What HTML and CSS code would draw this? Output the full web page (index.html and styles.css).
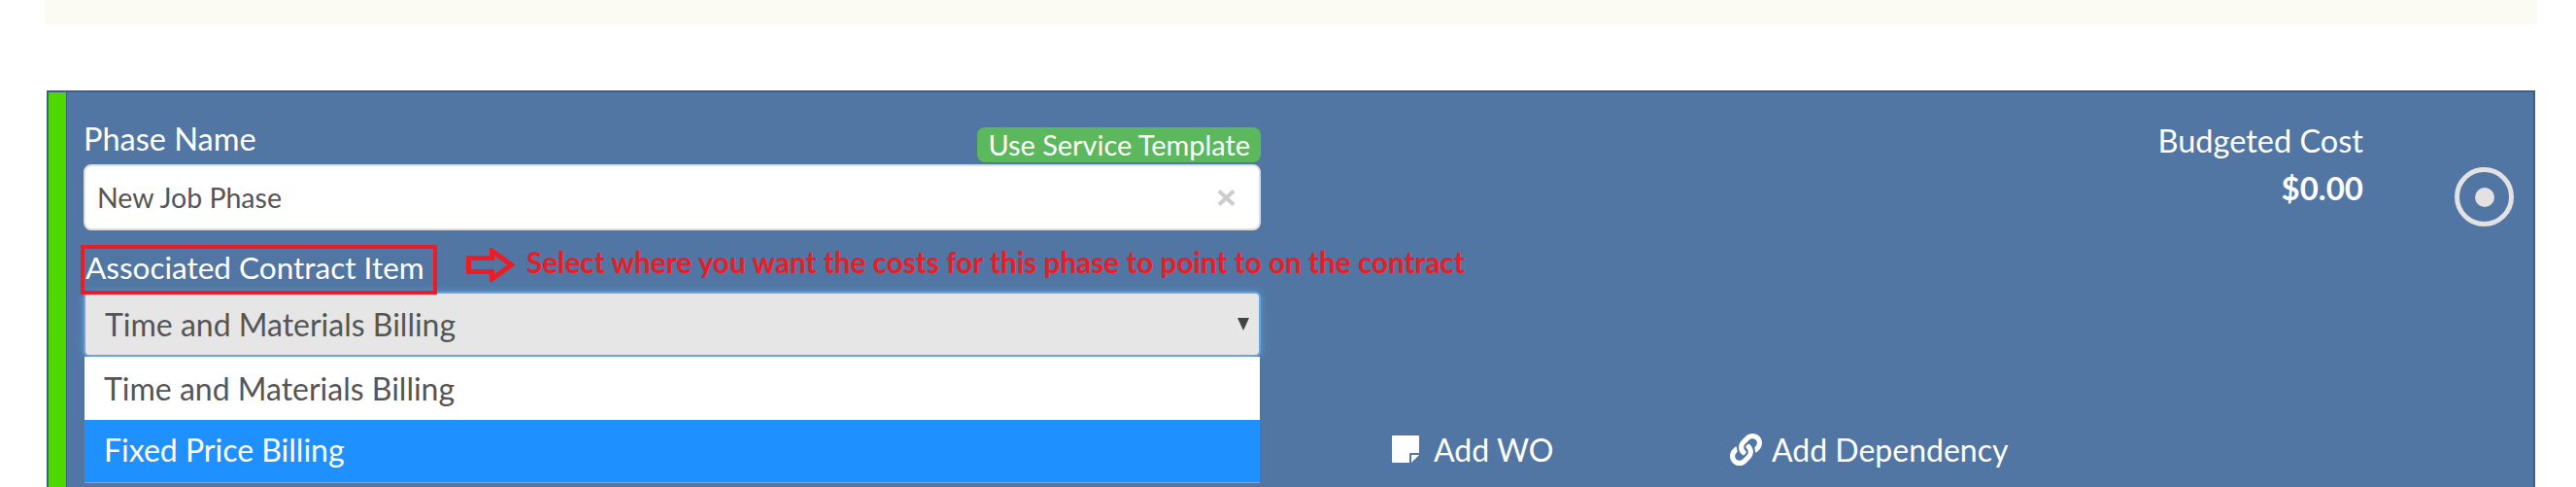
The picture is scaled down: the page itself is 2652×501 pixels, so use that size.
FILE: index.html

```html
<!DOCTYPE html>
<html lang="en">
<head>
  <meta charset="UTF-8" />
  <title>Job Phase</title>
  <link rel="stylesheet" href="styles.css">
</head>
<body>
  <div class="band"></div>

  <div class="panel">
    <div class="stripe"></div>

    <div class="phase-col">
      <div class="head-row">
        <div class="label">Phase Name</div>
        <div class="template-btn">Use Service Template</div>
      </div>
      <div class="text-input">
        <span>New Job Phase</span>
        <svg class="clear" viewBox="0 0 19 17">
          <path d="M2 1.500l15 14M17 1.500l-15 14" />
        </svg>
      </div>

      <div class="contract-row">
        <div class="label-box">Associated Contract Item</div>
        <svg class="note-arrow" viewBox="0 0 50 35">
          <path d="M2.500 10.500h24V3l20 14.500L26.500 32v-7.500h-24z" />
        </svg>
        <div class="note">Select where you want the costs for this phase to point to on the contract</div>
      </div>

      <div class="select-box">
        <span>Time and Materials Billing</span>
        <span class="caret"></span>
      </div>
      <div class="options">
        <div class="option">Time and Materials Billing</div>
        <div class="option selected">Fixed Price Billing</div>
      </div>
    </div>

    <div class="links">
      <div class="link link-wo">
        <svg class="icon-note" viewBox="0 0 28 28">
          <path d="M1 0h26a1 1 0 0 1 1 1v17H19a1 1 0 0 0-1 1v9H1a1 1 0 0 1-1-1V1a1 1 0 0 1 1-1zM20 20h8l-8 8z" />
        </svg>
        Add WO
      </div>
      <div class="link">
        <svg class="icon-chain" viewBox="0 0 512 512">
          <path d="M326.612 185.391c59.747 59.809 58.927 155.698.36 214.59-.11.12-.24.25-.36.37l-67.2 67.2c-59.27 59.27-155.699 59.262-214.96 0-59.27-59.26-59.27-155.7 0-214.96l37.106-37.106c9.84-9.84 26.786-3.3 27.294 10.606.648 17.722 3.826 35.527 9.69 52.721 1.986 5.822.567 12.262-3.783 16.612l-13.087 13.087c-28.026 28.026-28.905 73.66-1.155 101.96 28.024 28.579 74.086 28.749 102.325.51l67.2-67.19c28.191-28.191 28.073-73.757 0-101.83-3.701-3.694-7.429-6.564-10.341-8.569a16.037 16.037 0 0 1-6.947-12.606c-.396-10.567 3.348-21.456 11.698-29.806l21.054-21.055c5.521-5.521 14.182-6.199 20.584-1.731a152.482 152.482 0 0 1 20.522 17.197zM467.547 44.449c-59.261-59.262-155.69-59.27-214.96 0l-67.2 67.2c-.12.12-.25.25-.36.37-58.566 58.892-59.387 154.781.36 214.59a152.454 152.454 0 0 0 20.521 17.196c6.402 4.468 15.064 3.789 20.584-1.731l21.054-21.055c8.35-8.35 12.094-19.239 11.698-29.806a16.037 16.037 0 0 0-6.947-12.606c-2.912-2.005-6.64-4.875-10.341-8.569-28.073-28.073-28.191-73.639 0-101.83l67.2-67.19c28.239-28.239 74.3-28.069 102.325.51 27.75 28.3 26.872 73.934-1.155 101.96l-13.087 13.087c-4.35 4.35-5.769 10.79-3.783 16.612 5.864 17.194 9.042 34.999 9.69 52.721.509 13.906 17.454 20.446 27.294 10.606l37.106-37.106c59.271-59.259 59.271-155.699.001-214.959z" />
        </svg>
        Add Dependency
      </div>
    </div>

    <div class="cost">
      <div class="cost-label">Budgeted Cost</div>
      <div class="cost-value">$0.00</div>
    </div>

    <div class="radio"><div class="radio-dot"></div></div>
  </div>
</body>
</html>
```

FILE: styles.css

```css
html, body {
  margin: 0;
  padding: 0;
  height: 100%;
  background-color: white;
  overflow: hidden;
  font-family: "Lato", "Liberation Sans", sans-serif;
}
.band {
  height: 25px;
  width: 2566px;
  margin-left: 46px;
  background-color: #fbfbf3;
}
.panel {
  display: flex;
  box-sizing: border-box;
  width: 2562px;
  height: 408px;
  margin: 68px 0 0 48px;
  background-color: #5176a3;
  border: 2px solid #3a5f8b;
  border-bottom: 0;
}
.stripe {
  width: 18px;
  flex: none;
  background-color: #4fd700;
  border-right: 1px solid #3a5f8b;
}
.phase-col {
  width: 1212px;
  flex: none;
  margin-left: 17px;
  color: white;
}
.head-row {
  display: flex;
  justify-content: space-between;
  align-items: flex-end;
  height: 74px;
  padding-bottom: 2px;
  box-sizing: border-box;
}
.label {
  font-size: 32.500px;
  line-height: 36px;
  margin-bottom: 6px;
}
.template-btn {
  background-color: #5cb85c;
  border-radius: 8px;
  font-size: 28.900px;
  line-height: 36px;
  padding: 0 11px 0 11px;
}
.text-input {
  display: flex;
  justify-content: space-between;
  align-items: center;
  box-sizing: border-box;
  height: 68px;
  padding: 0 24px 0 12px;
  background-color: white;
  border: 2px solid #dedede;
  border-radius: 8px;
  color: #555;
  font-size: 28.500px;
}
.clear {
  width: 19px;
  height: 17px;
  fill: none;
  stroke: #ccc;
  stroke-width: 4;
}
.contract-row {
  display: flex;
  align-items: flex-start;
  height: 63px;
  margin: 15px 0 0 -3px;
}
.label-box {
  flex: none;
  box-sizing: border-box;
  width: 367px;
  height: 51px;
  padding-left: 1px;
  border: 4px solid #ed1c24;
  font-size: 31.500px;
  line-height: 38px;
  white-space: nowrap;
}
.note-arrow {
  flex: none;
  width: 50px;
  height: 35px;
  margin: 3px 0 0 30px;
  fill: none;
  stroke: #ed1c24;
  stroke-width: 5;
}
.note {
  flex: none;
  margin-left: 12px;
  color: #ed1c24;
  font-weight: bold;
  font-size: 29.700px;
  line-height: 36px;
  white-space: nowrap;
}
.select-box {
  display: flex;
  justify-content: space-between;
  align-items: center;
  box-sizing: border-box;
  height: 67px;
  margin-top: -15px;
  padding: 0 10px 0 20px;
  background-color: #e6e6e6;
  border: 2px solid #66a5e0;
  border-radius: 6px;
  box-shadow: 0 0 8px rgba(102, 175, 233, 0.6);
  color: #555;
  font-size: 32px;
}
.caret {
  width: 0;
  height: 0;
  border-left: 6px solid transparent;
  border-right: 6px solid transparent;
  border-top: 13px solid #444;
}
.options {
  margin: 0 1px;
  background-color: white;
  border-bottom: 1px solid #7ba6de;
  color: #555;
  font-size: 32px;
}
.option {
  height: 65px;
  line-height: 66px;
  padding-left: 20px;
}
.selected {
  background-color: #1e90ff;
  color: white;
  height: 64px;
  line-height: 62px;
}
.links {
  display: flex;
  align-items: center;
  width: 800px;
  flex: none;
  height: 46px;
  margin-top: 344px;
  padding-left: 135px;
  box-sizing: border-box;
  color: white;
  font-size: 32px;
}
.link {
  display: flex;
  align-items: center;
  white-space: nowrap;
}
.link-wo {
  width: 348px;
}
.icon-note {
  width: 28px;
  height: 28px;
  margin-right: 15px;
  fill: white;
}
.icon-chain {
  width: 33px;
  height: 33px;
  margin-right: 10px;
  fill: white;
}
.cost {
  width: 335px;
  flex: none;
  padding-top: 30px;
  color: white;
  text-align: right;
}
.cost-label {
  font-size: 32.500px;
  line-height: 40px;
}
.cost-value {
  margin-top: 8px;
  font-size: 33px;
  line-height: 40px;
  font-weight: bold;
}
.radio {
  display: flex;
  justify-content: center;
  align-items: center;
  box-sizing: border-box;
  width: 61px;
  height: 61px;
  flex: none;
  margin: 77px 0 0 94px;
  border: 5px solid #e2e2e2;
  border-radius: 50%;
}
.radio-dot {
  width: 20px;
  height: 20px;
  background-color: #e2e2e2;
  border-radius: 50%;
}
```
